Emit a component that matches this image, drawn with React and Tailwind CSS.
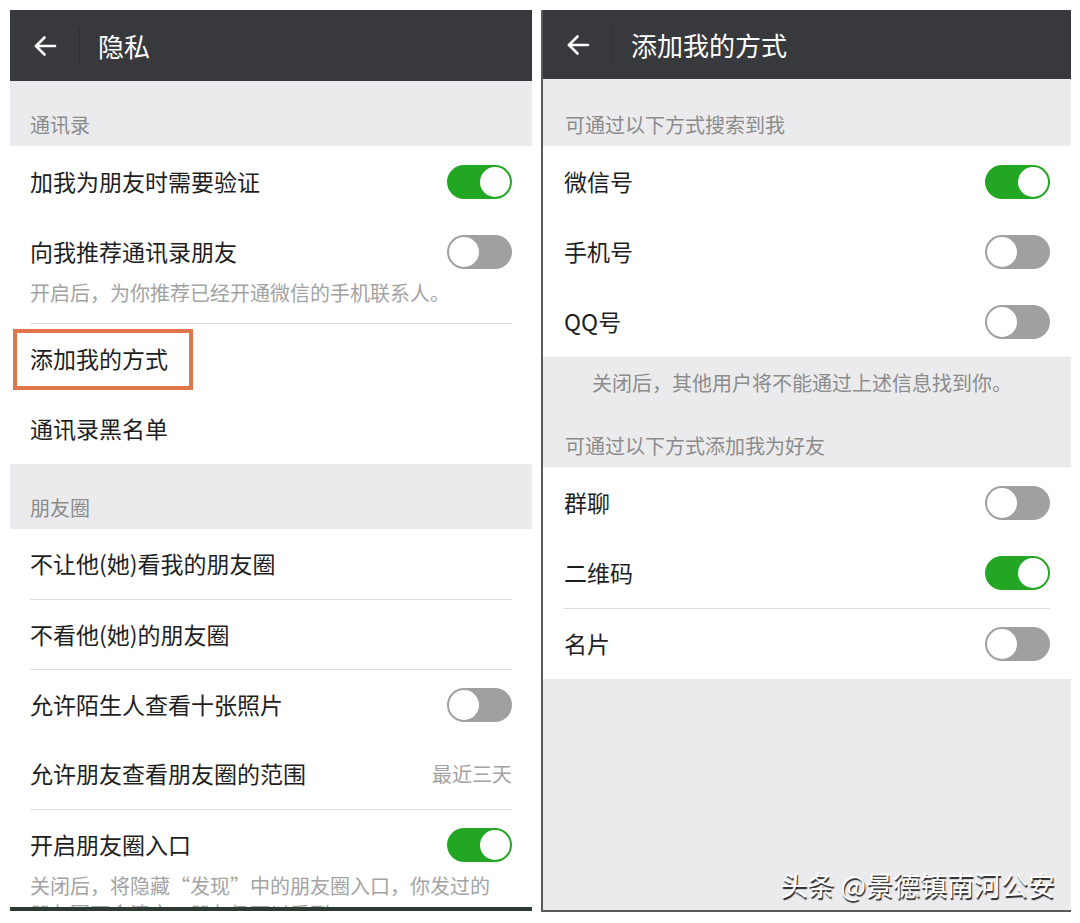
import React from "react";

const FONT = "font-['Noto_Sans_CJK_SC','Noto_Sans',sans-serif]";

const Toggle = ({ on }) => (
  <div
    className={`w-[65px] h-[34px] rounded-full p-[2px] flex shrink-0 ${
      on ? "bg-[#23a623] justify-end" : "bg-[#a0a0a0] justify-start"
    }`}
  >
    <div className="w-[30px] h-[30px] rounded-full bg-white" />
  </div>
);

const BackArrow = () => (
  <svg width="24" height="22" viewBox="0 0 24 22" fill="none" stroke="#fff" strokeWidth="2.6" strokeLinecap="round" strokeLinejoin="round">
    <path d="M22 11H3" />
    <path d="M11.5 2.5L3 11l8.5 8.5" />
  </svg>
);

const Header = ({ title, height }) => (
  <div className={`${height} bg-[#38393d] flex items-center shrink-0`}>
    <div className="pl-[23px]">
      <BackArrow />
    </div>
    <div className="ml-[22px] w-px h-[36px] bg-[#2e2f32]" />
    <div className="ml-[18px] text-white text-[26px] leading-[32px]">{title}</div>
  </div>
);

const SectionTitle = ({ children, height, pl }) => (
  <div className={`${height} ${pl} bg-[#ebebed] flex items-end pb-[8px] shrink-0`}>
    <span className="text-[20px] leading-[26px] text-[#8c8c8c]">{children}</span>
  </div>
);

const Row = ({ label, toggle, value, divider, px = "px-[20px]", h = "h-[70px]" }) => (
  <div className={`bg-white ${px} shrink-0`}>
    <div className={`${h} flex items-center justify-between ${divider ? "border-t border-[#dcdcdc]" : ""}`}>
      <span className="text-[23px] leading-[30px] text-[#1e1e1e] -mt-[2px]">{label}</span>
      {toggle !== undefined && <Toggle on={toggle} />}
      {value && <span className="text-[20px] leading-[26px] text-[#a3a3a3]">{value}</span>}
    </div>
  </div>
);

export default function App() {
  return (
    <div className={`w-[1080px] h-[923px] bg-white flex pt-[10px] ${FONT}`}>
      {/* 隐私 */}
      <div className="ml-[10px] w-[522px] h-[901px] flex flex-col">
        <div className="flex-1 overflow-hidden flex flex-col bg-white">
          <Header title="隐私" height="h-[71px]" />
          <SectionTitle height="h-[65px]" pl="pl-[20px]">通讯录</SectionTitle>
          <Row label="加我为朋友时需要验证" toggle={true} h="h-[71px]" />
          <div className="bg-white px-[20px] pt-[18px] shrink-0">
            <div className="flex items-center justify-between h-[33px]">
              <span className="text-[23px] leading-[30px] text-[#1e1e1e] -mt-[2px]">向我推荐通讯录朋友</span>
              <Toggle on={false} />
            </div>
            <div className="mt-[12px] pb-[17px] border-b border-[#dcdcdc] text-[20px] leading-[26px] text-[#a3a3a3]">
              开启后，为你推荐已经开通微信的手机联系人。
            </div>
          </div>
          <div className="relative shrink-0">
            <Row label="添加我的方式" />
            <div className="absolute left-[3px] top-[5px] w-[180px] h-[61px] border-[4px] border-[#e2764b]" />
          </div>
          <Row label="通讯录黑名单" />
          <SectionTitle height="h-[65px]" pl="pl-[20px]">朋友圈</SectionTitle>
          <Row label="不让他(她)看我的朋友圈" />
          <Row label="不看他(她)的朋友圈" divider />
          <Row label="允许陌生人查看十张照片" toggle={false} divider />
          <Row label="允许朋友查看朋友圈的范围" value="最近三天" />
          <div className="bg-white px-[20px] shrink-0">
            <div className="border-t border-[#dcdcdc] pt-[18px]">
              <div className="flex items-center justify-between h-[34px]">
                <span className="text-[23px] leading-[30px] text-[#1e1e1e] -mt-[2px]">开启朋友圈入口</span>
                <Toggle on={true} />
              </div>
              <div className="mt-[10px] max-w-[470px] text-[20px] leading-[28px] text-[#a3a3a3]">
                关闭后，将隐藏“发现”中的朋友圈入口，你发过的朋友圈不会清空，朋友仍可以看到。
              </div>
            </div>
          </div>
        </div>
        <div className="h-[4px] bg-[#2c3a32] shrink-0" />
      </div>

      {/* 添加我的方式 */}
      <div className="ml-[9px] w-[530px] h-[902px] border-l-2 border-b-2 border-[#5a5a5a] bg-[#ebebed] flex flex-col relative">
        <Header title="添加我的方式" height="h-[69px]" />
        <SectionTitle height="h-[67px]" pl="pl-[22px]">可通过以下方式搜索到我</SectionTitle>
        <Row label="微信号" toggle={true} px="px-[21px]" h="h-[71px]" />
        <Row label="手机号" toggle={false} px="px-[21px]" />
        <Row label="QQ号" toggle={false} px="px-[21px]" />
        <div className="h-[110px] flex flex-col justify-between pt-[13px] pb-[8px] shrink-0">
          <div className="pl-[49px] text-[20px] leading-[26px] text-[#8c8c8c]">
            关闭后，其他用户将不能通过上述信息找到你。
          </div>
          <div className="pl-[22px] text-[20px] leading-[26px] text-[#8c8c8c]">可通过以下方式添加我为好友</div>
        </div>
        <Row label="群聊" toggle={false} px="px-[21px]" h="h-[71px]" />
        <Row label="二维码" toggle={true} px="px-[21px]" />
        <Row label="名片" toggle={false} px="px-[21px]" h="h-[71px]" divider />
        <div className="absolute right-[16px] bottom-[8px] text-white text-[27px] leading-[34px] [text-shadow:1px_2px_1px_#222]">
          头条 @景德镇南河公安
        </div>
      </div>
    </div>
  );
}
